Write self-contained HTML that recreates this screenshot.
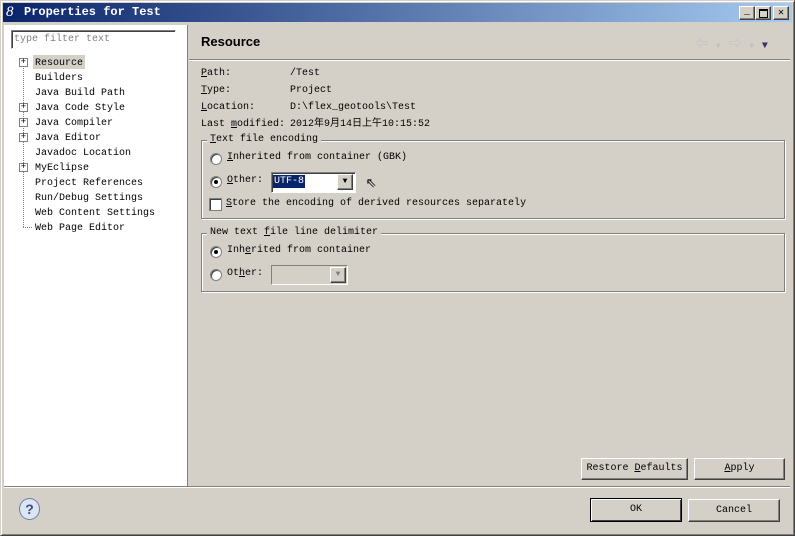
<!DOCTYPE html>
<html><head><style>
body{margin:0;width:795px;height:536px;background:#d4d0c8;position:relative;overflow:hidden;font-family:"Liberation Mono","Noto Sans CJK SC",monospace;font-size:10px;color:#000}
.a{position:absolute;white-space:nowrap}
.t{position:absolute;left:0;top:0;width:795px;height:536px;box-sizing:border-box;border:1px solid;border-color:#d4d0c8 #404040 #404040 #d4d0c8;box-shadow:inset 1px 1px #fff,inset -1px -1px #808080}
.title{left:3px;top:3px;width:789px;height:19px;background:linear-gradient(90deg,#0a246a,#a6caf0)}
.btn{position:absolute;background:#d4d0c8;box-sizing:border-box;border:1px solid;border-color:#fff #404040 #404040 #fff;box-shadow:inset -1px -1px #808080;text-align:center;line-height:20px}
.grp{position:absolute;border:1px solid #808080;box-shadow:1px 1px #fff,inset 1px 1px #fff}
.rad{position:absolute;width:10px;height:10px;border-radius:50%;background:#fff;border:1px solid #808080;box-shadow:inset 1px 1px #404040}
.u{text-decoration:underline}
.pl{position:absolute;left:19px;width:7px;height:7px;border:1px solid #808080;background:#fff;font-size:9px;line-height:7px;text-align:center}
</style></head><body>
<div class="t"></div>
<div class="a title"></div>
<div class="a" style="left:6px;top:5px;color:#fff;font-family:'Liberation Serif',serif;font-style:italic;font-size:15px;line-height:15px">8</div>
<div class="a" style="left:24px;top:5px;color:#fff;font-weight:bold;font-size:12px">Properties for Test</div>
<div class="btn" style="left:739px;top:6px;width:16px;height:14px;line-height:12px">_</div>
<div class="btn" style="left:755px;top:6px;width:16px;height:14px"><div class="a" style="left:3px;top:2px;width:7px;height:6px;border:1px solid #000;border-top-width:2px"></div></div>
<div class="btn" style="left:773px;top:6px;width:16px;height:14px;line-height:13px;font-weight:bold">✕</div>
<!-- left panel -->
<div class="a" style="left:4px;top:25px;width:183px;height:461px;background:#fff;border-right:1px solid #808080"></div>
<div class="a" style="left:11px;top:30px;width:163px;height:17px;border:1px solid;border-color:#808080 #fff #fff #808080;box-shadow:inset 1px 1px #404040;background:#fff"></div>
<div class="a" style="left:14px;top:34px;color:#808080">type filter text</div>
<div class="a" style="left:33px;top:55px;width:52px;height:14px;background:#d4d0c8"></div>
<div class="a" style="left:23px;top:62px;height:165px;border-left:1px dotted #808080"></div>
<div class="a" style="left:23px;top:227px;width:9px;border-top:1px dotted #808080"></div>
<div class="a" style="left:35px;top:56px;line-height:15px">Resource<br>Builders<br>Java Build Path<br>Java Code Style<br>Java Compiler<br>Java Editor<br>Javadoc Location<br>MyEclipse<br>Project References<br>Run/Debug Settings<br>Web Content Settings<br>Web Page Editor</div>
<div class="pl" style="top:58px">+</div>
<div class="pl" style="top:103px">+</div>
<div class="pl" style="top:118px">+</div>
<div class="pl" style="top:133px">+</div>
<div class="pl" style="top:163px">+</div>
<!-- right -->
<div class="a" style="left:201px;top:34px;font-family:'Liberation Sans',sans-serif;font-weight:bold;font-size:13px">Resource</div>
<div class="a" style="left:695px;top:33px;color:#c0c0c0;font-size:13px">⇦ <span style="font-size:8px">▼</span> ⇨ <span style="font-size:8px">▼</span> <span style="color:#333366;font-size:10px">▼</span></div>
<div class="a" style="left:189px;top:59px;width:601px;border-top:1px solid #808080;border-bottom:1px solid #fff"></div>
<div class="a" style="left:201px;top:65px;line-height:17px"><span class="u">P</span>ath:<br><span class="u">T</span>ype:<br><span class="u">L</span>ocation:<br>Last <span class="u">m</span>odified:</div>
<div class="a" style="left:290px;top:65px;line-height:17px">/Test<br>Project<br>D:\flex_geotools\Test<br>2012年9月14日上午10:15:52</div>
<div class="grp" style="left:201px;top:140px;width:582px;height:77px"></div>
<div class="a" style="left:207px;top:134px;background:#d4d0c8;padding:0 3px"><span class="u">T</span>ext file encoding</div>
<div class="rad" style="left:210px;top:153px;"></div>
<div class="a" style="left:227px;top:152px"><span class="u">I</span>nherited from container (GBK)</div>
<div class="rad" style="left:210px;top:176px"></div><div class="a" style="left:214px;top:180px;width:4px;height:4px;background:#000;border-radius:50%"></div>
<div class="a" style="left:227px;top:175px"><span class="u">O</span>ther:</div>
<div class="a" style="left:271px;top:172px;width:83px;height:19px;background:#fff;border:1px solid;border-color:#808080 #fff #fff #808080;box-shadow:inset 1px 1px #404040"></div>
<div class="a" style="left:273px;top:175px;background:#0a246a;color:#fff;padding:0 1px;line-height:13px">UTF-8</div>
<div class="btn" style="left:337px;top:174px;width:16px;height:16px;line-height:14px;font-size:8px">▼</div>
<div class="a" style="left:366px;top:174px;font-size:18px;line-height:18px">⇖</div>
<div class="a" style="left:209px;top:198px;width:11px;height:11px;background:#fff;border:1px solid #808080;box-shadow:inset 1px 1px #404040"></div>
<div class="a" style="left:226px;top:198px"><span class="u">S</span>tore the encoding of derived resources separately</div>
<div class="grp" style="left:201px;top:233px;width:582px;height:57px"></div>
<div class="a" style="left:207px;top:227px;background:#d4d0c8;padding:0 3px">New text <span class="u">f</span>ile line delimiter</div>
<div class="rad" style="left:210px;top:246px"></div><div class="a" style="left:214px;top:250px;width:4px;height:4px;background:#000;border-radius:50%"></div>
<div class="a" style="left:227px;top:245px">Inh<span class="u">e</span>rited from container</div>
<div class="rad" style="left:210px;top:269px"></div>
<div class="a" style="left:227px;top:268px">Ot<span class="u">h</span>er:</div>
<div class="a" style="left:271px;top:265px;width:75px;height:18px;background:#d4d0c8;border:1px solid;border-color:#808080 #fff #fff #808080"></div>
<div class="btn" style="left:330px;top:267px;width:16px;height:16px;line-height:14px;font-size:8px;color:#808080">▼</div>
<div class="btn" style="left:581px;top:458px;width:107px;height:22px"><span>Restore <span class="u">D</span>efaults</span></div>
<div class="btn" style="left:694px;top:458px;width:91px;height:22px"><span class="u">A</span>pply</div>
<div class="a" style="left:4px;top:486px;width:786px;border-top:1px solid #808080;border-bottom:1px solid #fff"></div>
<div class="a" style="left:19px;top:498px;width:19px;height:20px;border-radius:50%;background:#dde4f2;border:1px solid #6a7fb0;text-align:center;font:bold 14px/20px 'Liberation Sans',sans-serif;color:#3a4f88">?</div>
<div class="btn" style="left:590px;top:498px;width:92px;height:24px;border:1px solid #000;box-shadow:inset 1px 1px #fff,inset -1px -1px #404040;line-height:22px">OK</div>
<div class="btn" style="left:688px;top:499px;width:92px;height:23px;line-height:21px">Cancel</div>
</body></html>
